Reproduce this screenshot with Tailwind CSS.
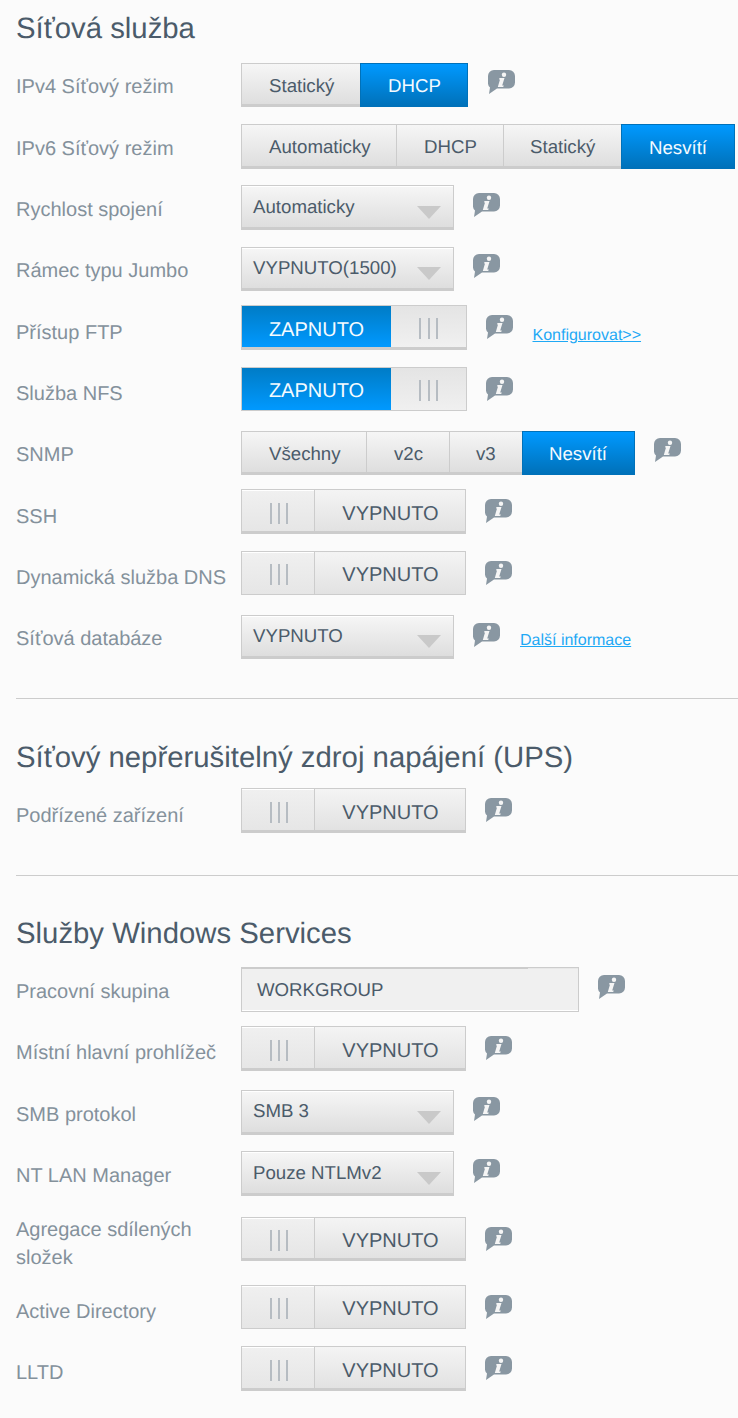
<!DOCTYPE html>
<html lang="cs"><head><meta charset="utf-8">
<script src="https://cdn.jsdelivr.net/npm/@tailwindcss/browser@4"></script>
</head>
<body class="w-[738px] h-[1418px] overflow-hidden bg-[#fbfbfb] font-['Liberation_Sans',Arial,sans-serif] [text-rendering:geometricPrecision]">
<svg class="hidden"><symbol id="info" viewBox="0 0 27 24"><path d="M6 0H21A6 6 0 0 1 27 6V12.500A6 6 0 0 1 21 18.500H9L1 24L2 17.500A6 6 0 0 1 0 12.500V6A6 6 0 0 1 6 0Z" fill="#8997a2"/><circle cx="16" cy="4.800" r="2.200" fill="#f5f5f5"/><path d="M11.500 8H16.500L14.200 15.500H15.800L15.200 17H9.800L12 9.500H11Z" fill="#f5f5f5"/></symbol></svg>
<main class="pl-4">
<h2 class="h-[59px] pt-[9px] text-[29.33px] leading-10 text-[#4b5b6a]">Síťová služba</h2>

<div class="flex h-[62px]"><div class="w-[225px] pt-[14px] text-[20px] leading-7 text-[#84919b]">IPv4 Síťový režim</div>
 <div class="mt-1 flex items-start">
  <div class="flex h-[44px] text-[18.67px]"><span class="flex w-[119px] items-center pl-[27px] pt-[3px] bg-gradient-to-b from-[#f6f6f6] to-[#dedede] border border-r-0 border-b-[3px] border-[#cccccc] text-[#4b5b6a]">Statický</span><span class="flex w-[108px] items-center pl-[27px] pt-[2px] bg-gradient-to-b from-[#0099ff] to-[#0071b9] border border-[#0071b9] text-[#f5fbff]">DHCP</span></div>
  <svg class="ml-5 mt-[7px] w-[27px] h-6 blur-[0.4px]"><use href="#info"/></svg>
 </div></div>

<div class="flex h-[61px]"><div class="w-[225px] pt-[14px] text-[20px] leading-7 text-[#84919b]">IPv6 Síťový režim</div>
 <div class="mt-[3px] flex items-start">
  <div class="flex h-[45px] text-[18.67px] text-[#4b5b6a]"><span class="flex w-[156px] items-center pl-[27px] pt-[3px] bg-gradient-to-b from-[#f6f6f6] to-[#dedede] border border-b-[3px] border-[#cccccc]">Automaticky</span><span class="flex w-[107px] items-center pl-[27px] pt-[3px] bg-gradient-to-b from-[#f6f6f6] to-[#dedede] border border-l-0 border-b-[3px] border-[#cccccc]">DHCP</span><span class="flex w-[117px] items-center pl-[26px] pt-[3px] bg-gradient-to-b from-[#f6f6f6] to-[#dedede] border-t border-b-[3px] border-[#cccccc]">Statický</span><span class="flex w-[114px] items-center pl-[27px] pt-[2px] bg-gradient-to-b from-[#0099ff] to-[#0071b9] border border-[#0071b9] text-[#f5fbff]">Nesvítí</span></div>
 </div></div>

<div class="flex h-[61px]"><div class="w-[225px] pt-[14px] text-[20px] leading-7 text-[#84919b]">Rychlost spojení</div>
 <div class="mt-[3px] flex items-start">
  <div class="relative flex h-[45px] w-[213px] pl-[11px] items-center text-[18.67px] text-[#4b5b6a] bg-gradient-to-b from-[#f6f6f6] to-[#dedede] border border-b-[3px] border-[#cccccc] shadow-[inset_0_1px_0_#ffffff]">Automaticky<svg class="absolute right-3 top-[20px] w-6 h-[13px]" viewBox="0 0 24 13"><path d="M0 0H24L12 13Z" fill="#c9c9c9"/></svg></div>
  <svg class="ml-[19px] mt-2 w-[27px] h-6 blur-[0.4px]"><use href="#info"/></svg>
 </div></div>

<div class="flex h-[62px]"><div class="w-[225px] pt-[14px] text-[20px] leading-7 text-[#84919b]">Rámec typu Jumbo</div>
 <div class="mt-1 flex items-start">
  <div class="relative flex h-[44px] w-[213px] pl-[11px] pb-px items-center text-[18.67px] text-[#4b5b6a] bg-gradient-to-b from-[#f6f6f6] to-[#dedede] border border-b-[3px] border-[#cccccc] shadow-[inset_0_1px_0_#ffffff]">VYPNUTO(1500)<svg class="absolute right-3 top-[19px] w-6 h-[13px]" viewBox="0 0 24 13"><path d="M0 0H24L12 13Z" fill="#c9c9c9"/></svg></div>
  <svg class="ml-[19px] mt-[7px] w-[27px] h-6 blur-[0.4px]"><use href="#info"/></svg>
 </div></div>

<div class="flex h-[61px]"><div class="w-[225px] pt-[14px] text-[20px] leading-7 text-[#84919b]">Přístup FTP</div>
 <div class="flex items-start">
  <div class="flex h-[45px] w-[226px] border border-b-[3px] border-[#cccccc] text-[20px]"><span class="flex w-[149px] items-center justify-center pt-[6px] bg-gradient-to-b from-[#007cc6] to-[#0099ff] text-[#f5fbff]">ZAPNUTO</span><span class="flex flex-1 items-center justify-center gap-[6.500px] pt-1 bg-gradient-to-b from-[#e4e4e4] to-[#f0f0f0]"><i class="w-[2px] h-[21px] bg-[#b6bcc2]"></i><i class="w-[2px] h-[21px] bg-[#b6bcc2]"></i><i class="w-[2px] h-[21px] bg-[#b6bcc2]"></i></span></div>
  <svg class="ml-[19px] mt-[10px] w-[27px] h-6 blur-[0.4px]"><use href="#info"/></svg>
  <a class="ml-[19.500px] mt-[21px] text-[16px] leading-5 text-[#1fa9f5] underline">Konfigurovat&gt;&gt;</a>
 </div></div>

<div class="flex h-[61px]"><div class="w-[225px] pt-[14px] text-[20px] leading-7 text-[#84919b]">Služba NFS</div>
 <div class="mt-px flex items-start">
  <div class="flex h-[44px] w-[226px] border border-[#cccccc] text-[20px]"><span class="flex w-[149px] items-center justify-center pt-[3px] bg-gradient-to-b from-[#007cc6] to-[#0099ff] text-[#f5fbff]">ZAPNUTO</span><span class="flex flex-1 items-center justify-center gap-[6.500px] pt-[3px] bg-gradient-to-b from-[#e4e4e4] to-[#f0f0f0]"><i class="w-[2px] h-[21px] bg-[#b6bcc2]"></i><i class="w-[2px] h-[21px] bg-[#b6bcc2]"></i><i class="w-[2px] h-[21px] bg-[#b6bcc2]"></i></span></div>
  <svg class="ml-[19px] mt-[10px] w-[27px] h-6 blur-[0.4px]"><use href="#info"/></svg>
 </div></div>

<div class="flex h-[62px]"><div class="w-[225px] pt-[14px] text-[20px] leading-7 text-[#84919b]">SNMP</div>
 <div class="mt-1 flex items-start">
  <div class="flex h-[44px] text-[18.67px] text-[#4b5b6a]"><span class="flex w-[126px] items-center pl-[27px] pt-[3px] bg-gradient-to-b from-[#f6f6f6] to-[#dedede] border border-b-[3px] border-[#cccccc]">Všechny</span><span class="flex w-[83px] items-center pl-[27px] pt-[3px] bg-gradient-to-b from-[#f6f6f6] to-[#dedede] border border-l-0 border-b-[3px] border-[#cccccc]">v2c</span><span class="flex w-[72px] items-center pl-[26px] pt-[3px] bg-gradient-to-b from-[#f6f6f6] to-[#dedede] border-t border-b-[3px] border-[#cccccc]">v3</span><span class="flex w-[113px] items-center pl-[26px] pt-[2px] bg-gradient-to-b from-[#0099ff] to-[#0071b9] border border-[#0071b9] text-[#f5fbff]">Nesvítí</span></div>
  <svg class="ml-[19px] mt-[7px] w-[27px] h-6 blur-[0.4px]"><use href="#info"/></svg>
 </div></div>

<div class="flex h-[61px]"><div class="w-[225px] pt-[14px] text-[20px] leading-7 text-[#84919b]">SSH</div>
 <div class="flex items-start">
  <div class="flex h-[45px] w-[225px] border border-b-[3px] border-[#cccccc] text-[20px] text-[#4b5b6a]"><span class="flex w-[73px] items-center justify-center gap-[6.300px] pl-[2px] pt-[6px] border-r border-[#cccccc] bg-gradient-to-b from-[#f0f0f0] to-[#e6e6e6] shadow-[inset_0_1px_0_#ffffff]"><i class="w-[2px] h-[21px] bg-[#b6bcc2]"></i><i class="w-[2px] h-[21px] bg-[#b6bcc2]"></i><i class="w-[2px] h-[21px] bg-[#b6bcc2]"></i></span><span class="flex flex-1 items-center justify-center pl-px pt-[7px] bg-gradient-to-b from-[#f4f4f4] to-[#e2e2e2]">VYPNUTO</span></div>
  <svg class="ml-[19px] mt-[10px] w-[27px] h-6 blur-[0.4px]"><use href="#info"/></svg>
 </div></div>

<div class="flex h-[61px]"><div class="w-[225px] pt-[14px] text-[20px] leading-7 text-[#84919b]">Dynamická služba DNS</div>
 <div class="mt-px flex items-start">
  <div class="flex h-[44px] w-[225px] border border-[#cccccc] text-[20px] text-[#4b5b6a]"><span class="flex w-[73px] items-center justify-center gap-[6.300px] pl-[2px] pt-[2px] border-r border-[#cccccc] bg-gradient-to-b from-[#f0f0f0] to-[#e6e6e6] shadow-[inset_0_1px_0_#ffffff]"><i class="w-[2px] h-[21px] bg-[#b6bcc2]"></i><i class="w-[2px] h-[21px] bg-[#b6bcc2]"></i><i class="w-[2px] h-[21px] bg-[#b6bcc2]"></i></span><span class="flex flex-1 items-center justify-center pl-px pt-[3px] bg-gradient-to-b from-[#f4f4f4] to-[#e2e2e2]">VYPNUTO</span></div>
  <svg class="ml-[19px] mt-[10px] w-[27px] h-6 blur-[0.4px]"><use href="#info"/></svg>
 </div></div>

<div class="flex h-[87px]"><div class="w-[225px] pt-[14px] text-[20px] leading-7 text-[#84919b]">Síťová databáze</div>
 <div class="mt-1 flex items-start">
  <div class="relative flex h-[44px] w-[213px] pl-[11px] pb-px items-center text-[18.67px] text-[#4b5b6a] bg-gradient-to-b from-[#f6f6f6] to-[#dedede] border border-b-[3px] border-[#cccccc] shadow-[inset_0_1px_0_#ffffff]">VYPNUTO<svg class="absolute right-3 top-[19px] w-6 h-[13px]" viewBox="0 0 24 13"><path d="M0 0H24L12 13Z" fill="#c9c9c9"/></svg></div>
  <svg class="ml-[19px] mt-2 w-[27px] h-6 blur-[0.4px]"><use href="#info"/></svg>
  <a class="ml-5 mt-4 text-[16px] leading-5 text-[#1fa9f5] underline">Další informace</a>
 </div></div>

<hr class="border-[#cccccc]">
<h2 class="h-[85px] pt-[39px] text-[29.33px] leading-10 text-[#4b5b6a]">Síťový nepřerušitelný zdroj napájení (UPS)</h2>

<div class="flex h-[91px]"><div class="w-[225px] pt-[18px] text-[20px] leading-7 text-[#84919b]">Podřízené zařízení</div>
 <div class="mt-1 flex items-start">
  <div class="flex h-[45px] w-[225px] border border-b-[3px] border-[#cccccc] text-[20px] text-[#4b5b6a]"><span class="flex w-[73px] items-center justify-center gap-[6.300px] pl-[2px] pt-[6px] border-r border-[#cccccc] bg-gradient-to-b from-[#f0f0f0] to-[#e6e6e6] shadow-[inset_0_1px_0_#ffffff]"><i class="w-[2px] h-[21px] bg-[#b6bcc2]"></i><i class="w-[2px] h-[21px] bg-[#b6bcc2]"></i><i class="w-[2px] h-[21px] bg-[#b6bcc2]"></i></span><span class="flex flex-1 items-center justify-center pl-px pt-[7px] bg-gradient-to-b from-[#f4f4f4] to-[#e2e2e2]">VYPNUTO</span></div>
  <svg class="ml-[19px] mt-[10px] w-[27px] h-6 blur-[0.4px]"><use href="#info"/></svg>
 </div></div>

<hr class="border-[#cccccc]">
<h2 class="h-[88px] pt-[38px] text-[29.33px] leading-10 text-[#4b5b6a]">Služby Windows Services</h2>

<div class="flex h-[61px]"><div class="w-[225px] pt-[14px] text-[20px] leading-7 text-[#84919b]">Pracovní skupina</div>
 <div class="mt-[3px] flex items-start">
  <div class="relative flex h-[45px] w-[338px] pl-[15px] items-center text-[18.67px] text-[#4b5b6a] bg-[#f0f0f0] border border-t-2 border-[#cccccc] shadow-[inset_0_-1px_0_#ffffff]">WORKGROUP<span class="absolute right-0 -top-px h-px w-[50px] bg-[#e8e8e8]"></span></div>
  <svg class="ml-[19px] mt-2 w-[27px] h-6 blur-[0.4px]"><use href="#info"/></svg>
 </div></div>

<div class="flex h-[62px]"><div class="w-[225px] pt-[14px] text-[20px] leading-7 text-[#84919b]">Místní hlavní prohlížeč</div>
 <div class="mt-[1px] flex items-start">
  <div class="flex h-[45px] w-[225px] border border-b-[3px] border-[#cccccc] text-[20px] text-[#4b5b6a]"><span class="flex w-[73px] items-center justify-center gap-[6.300px] pl-[2px] pt-[6px] border-r border-[#cccccc] bg-gradient-to-b from-[#f0f0f0] to-[#e6e6e6] shadow-[inset_0_1px_0_#ffffff]"><i class="w-[2px] h-[21px] bg-[#b6bcc2]"></i><i class="w-[2px] h-[21px] bg-[#b6bcc2]"></i><i class="w-[2px] h-[21px] bg-[#b6bcc2]"></i></span><span class="flex flex-1 items-center justify-center pl-px pt-[7px] bg-gradient-to-b from-[#f4f4f4] to-[#e2e2e2]">VYPNUTO</span></div>
  <svg class="ml-[19px] mt-[10px] w-[27px] h-6 blur-[0.4px]"><use href="#info"/></svg>
 </div></div>

<div class="flex h-[61px]"><div class="w-[225px] pt-[14px] text-[20px] leading-7 text-[#84919b]">SMB protokol</div>
 <div class="mt-[3px] flex items-start">
  <div class="relative flex h-[45px] w-[213px] pl-[11px] pb-px items-center text-[18.67px] text-[#4b5b6a] bg-gradient-to-b from-[#f6f6f6] to-[#dedede] border border-b-[3px] border-[#cccccc] shadow-[inset_0_1px_0_#ffffff]">SMB 3<svg class="absolute right-3 top-[20px] w-6 h-[13px]" viewBox="0 0 24 13"><path d="M0 0H24L12 13Z" fill="#c9c9c9"/></svg></div>
  <svg class="ml-[19px] mt-[7px] w-[27px] h-6 blur-[0.4px]"><use href="#info"/></svg>
 </div></div>

<div class="flex h-[67px]"><div class="w-[225px] pt-[14px] text-[20px] leading-7 text-[#84919b]">NT LAN Manager</div>
 <div class="mt-[3px] flex items-start">
  <div class="relative flex h-[45px] w-[213px] pl-[11px] items-center text-[18.67px] text-[#4b5b6a] bg-gradient-to-b from-[#f6f6f6] to-[#dedede] border border-b-[3px] border-[#cccccc] shadow-[inset_0_1px_0_#ffffff]">Pouze NTLMv2<svg class="absolute right-3 top-[20px] w-6 h-[13px]" viewBox="0 0 24 13"><path d="M0 0H24L12 13Z" fill="#c9c9c9"/></svg></div>
  <svg class="ml-[19px] mt-2 w-[27px] h-6 blur-[0.4px]"><use href="#info"/></svg>
 </div></div>

<div class="flex h-[69px]"><div class="w-[225px] pt-px text-[20px] leading-7 text-[#84919b]">Agregace sdílených složek</div>
 <div class="mt-[2px] flex items-start">
  <div class="flex h-[44px] w-[225px] border border-b-[3px] border-[#cccccc] text-[20px] text-[#4b5b6a]"><span class="flex w-[73px] items-center justify-center gap-[6.300px] pl-[2px] pt-1 border-r border-[#cccccc] bg-gradient-to-b from-[#f0f0f0] to-[#e6e6e6] shadow-[inset_0_1px_0_#ffffff]"><i class="w-[2px] h-[21px] bg-[#b6bcc2]"></i><i class="w-[2px] h-[21px] bg-[#b6bcc2]"></i><i class="w-[2px] h-[21px] bg-[#b6bcc2]"></i></span><span class="flex flex-1 items-center justify-center pl-px pt-[6px] bg-gradient-to-b from-[#f4f4f4] to-[#e2e2e2]">VYPNUTO</span></div>
  <svg class="ml-[19px] mt-[10px] w-[27px] h-6 blur-[0.4px]"><use href="#info"/></svg>
 </div></div>

<div class="flex h-[61px]"><div class="w-[225px] pt-[14px] text-[20px] leading-7 text-[#84919b]">Active Directory</div>
 <div class="mt-px flex items-start">
  <div class="flex h-[44px] w-[225px] border border-[#cccccc] text-[20px] text-[#4b5b6a]"><span class="flex w-[73px] items-center justify-center gap-[6.300px] pl-[2px] pt-[2px] border-r border-[#cccccc] bg-gradient-to-b from-[#f0f0f0] to-[#e6e6e6] shadow-[inset_0_1px_0_#ffffff]"><i class="w-[2px] h-[21px] bg-[#b6bcc2]"></i><i class="w-[2px] h-[21px] bg-[#b6bcc2]"></i><i class="w-[2px] h-[21px] bg-[#b6bcc2]"></i></span><span class="flex flex-1 items-center justify-center pl-px pt-[3px] bg-gradient-to-b from-[#f4f4f4] to-[#e2e2e2]">VYPNUTO</span></div>
  <svg class="ml-[19px] mt-[10px] w-[27px] h-6 blur-[0.4px]"><use href="#info"/></svg>
 </div></div>

<div class="flex h-[61px]"><div class="w-[225px] pt-[14px] text-[20px] leading-7 text-[#84919b]">LLTD</div>
 <div class="mt-px flex items-start">
  <div class="flex h-[45px] w-[225px] border border-b-[3px] border-[#cccccc] text-[20px] text-[#4b5b6a]"><span class="flex w-[73px] items-center justify-center gap-[6.300px] pl-[2px] pt-[6px] border-r border-[#cccccc] bg-gradient-to-b from-[#f0f0f0] to-[#e6e6e6] shadow-[inset_0_1px_0_#ffffff]"><i class="w-[2px] h-[21px] bg-[#b6bcc2]"></i><i class="w-[2px] h-[21px] bg-[#b6bcc2]"></i><i class="w-[2px] h-[21px] bg-[#b6bcc2]"></i></span><span class="flex flex-1 items-center justify-center pl-px pt-[7px] bg-gradient-to-b from-[#f4f4f4] to-[#e2e2e2]">VYPNUTO</span></div>
  <svg class="ml-[19px] mt-[10px] w-[27px] h-6 blur-[0.4px]"><use href="#info"/></svg>
 </div></div>
</main>
</body></html>
